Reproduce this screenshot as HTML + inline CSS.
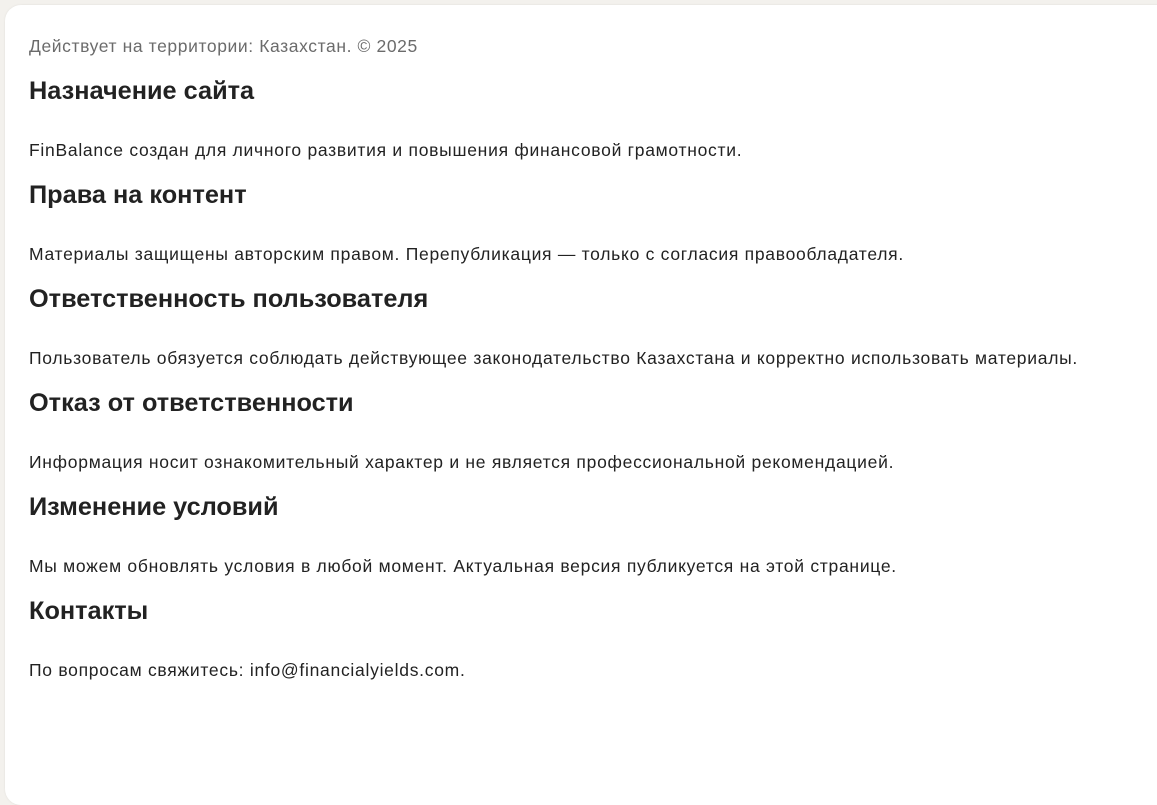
<!DOCTYPE html>
<html><head><meta charset="utf-8"><style>
html,body{margin:0;padding:0;background:#f3f1ed;width:1157px;height:683px;overflow:hidden}
.card{position:absolute;left:5px;top:5px;width:1200px;height:800px;background:#fff;border-radius:16px;box-shadow:0 0 2px rgba(0,0,0,0.08)}
.c{position:absolute;left:29px;top:34px;font-family:"Liberation Sans",sans-serif;color:#222;white-space:nowrap}
.m{margin:0 0 13px;font-size:17.5px;letter-spacing:0.6px;line-height:24px;color:#6b6b6b}
h2{margin:0;font-size:25.3px;line-height:40px;height:40px;font-weight:bold;color:#222}
p{margin:27px 0 13px;font-size:17.5px;letter-spacing:0.72px;line-height:24px;color:#222}
</style></head><body>
<div class="card"></div>
<div class="c">
<div class="m">Действует на территории: Казахстан. © 2025</div>
<h2>Назначение сайта</h2>
<p>FinBalance создан для личного развития и повышения финансовой грамотности.</p>
<h2>Права на контент</h2>
<p>Материалы защищены авторским правом. Перепубликация — только с согласия правообладателя.</p>
<h2>Ответственность пользователя</h2>
<p>Пользователь обязуется соблюдать действующее законодательство Казахстана и корректно использовать материалы.</p>
<h2>Отказ от ответственности</h2>
<p>Информация носит ознакомительный характер и не является профессиональной рекомендацией.</p>
<h2>Изменение условий</h2>
<p>Мы можем обновлять условия в любой момент. Актуальная версия публикуется на этой странице.</p>
<h2>Контакты</h2>
<p>По вопросам свяжитесь: info@financialyields.com.</p>
</div>
</body></html>
